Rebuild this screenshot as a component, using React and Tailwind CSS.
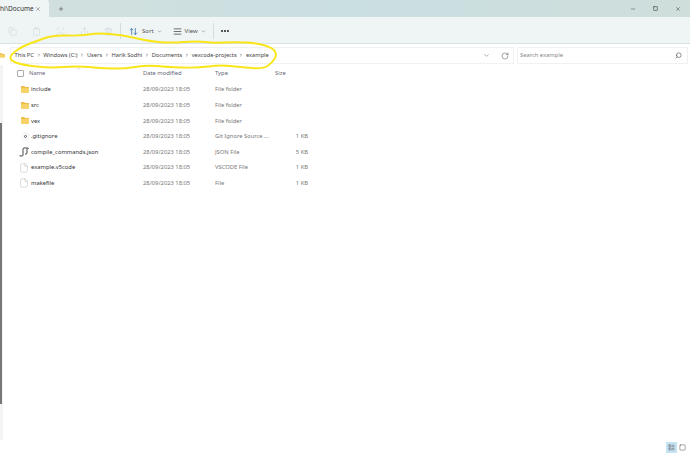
import { ChevronDown, ChevronRight, ChevronUp, Copy, Clipboard, Share, Trash2, ArrowUpDown, AlignJustify, MoreHorizontal, RotateCw, Search, Minus, X, Plus, File, ScanFace, LayoutList, Square } from 'lucide-react';

const CRUMBS = ['This PC', 'Windows (C:)', 'Users', 'Harik Sodhi', 'Documents', 'vexcode-projects', 'example'];

const FILES = [
  { name: 'include', type: 'File folder', size: '', kind: 'folder' },
  { name: 'src', type: 'File folder', size: '', kind: 'folder' },
  { name: 'vex', type: 'File folder', size: '', kind: 'folder' },
  { name: '.gitignore', type: 'Git Ignore Source ...', size: '1 KB', kind: 'git' },
  { name: 'compile_commands.json', type: 'JSON File', size: '5 KB', kind: 'json' },
  { name: 'example.v5code', type: 'VSCODE File', size: '1 KB', kind: 'file' },
  { name: 'makefile', type: 'File', size: '1 KB', kind: 'file' },
];

// hand-drawn yellow ring round the breadcrumb
const RING = [
  [10, 55], [23, 46], [37, 41], [53, 35], [80, 36], [97, 33], [123, 35], [147, 41], [170, 43], [197, 41], [213, 43],
  [233, 42], [257, 43], [273, 48], [277, 55], [272, 63], [263, 69], [240, 67], [220, 65], [197, 68], [167, 67],
  [147, 65], [123, 69], [100, 68], [77, 66], [50, 68], [23, 65], [11, 61],
];

function ringPath(points) {
  const mid = (a, b) => [(a[0] + b[0]) / 2, (a[1] + b[1]) / 2];
  const start = mid(points[points.length - 1], points[0]);
  let d = `M${start[0]} ${start[1]}`;
  points.forEach((p, i) => {
    const m = mid(p, points[(i + 1) % points.length]);
    d += ` Q${p[0]} ${p[1]} ${m[0]} ${m[1]}`;
  });
  return d + ' Z';
}

function FolderIcon({ className }) {
  return (
    <svg className={className} viewBox="0 0 8 7">
      <path d="M0 1 Q0 0 1 0 H3 L4 1 H7 Q8 1 8 2 V6 Q8 7 7 7 H1 Q0 7 0 6 Z" fill="#f7d268" />
      <path d="M0 1 Q0 0 1 0 H3 L4 1 H8 V2 H0 Z" fill="#eebc48" />
    </svg>
  );
}

function FileIcon({ kind }) {
  if (kind === 'folder') return <FolderIcon className="h-[7px] w-[8px]" />;
  if (kind === 'git') {
    return (
      <span className="relative flex h-[9px] w-[8px] items-center justify-center">
        <File className="absolute h-[9px] w-[9px] text-[#ddd]" strokeWidth={1} />
        <span className="relative h-[3px] w-[3px] rounded-full border border-[#556]" />
      </span>
    );
  }
  if (kind === 'json') {
    return (
      <svg className="h-[10px] w-[10px]" viewBox="0 0 10 10" fill="none" stroke="#333" strokeWidth="0.9">
        <path d="M3 9 H1.5 Q.5 9 1 8 M3 9 Q4 9 4 8 V2 Q4 1 5 1 H8.5 Q9.5 1 9.5 2 M8 1.5 V6 Q8 7 7 7 H6" />
      </svg>
    );
  }
  return <File className="h-[10px] w-[10px] text-[#aaa]" strokeWidth={1} />;
}

function App() {
  return (
    <div className="relative flex h-[454px] w-[690px] flex-col overflow-hidden bg-white font-['Noto_Sans',sans-serif] text-[#555]">
      <div className="flex h-[17px] items-center bg-[linear-gradient(90deg,#d2e0dd,#cadfe2_50%,#cfdedb)]">
        <div className="flex h-[17px] w-[49px] items-center rounded-tr-[3px] bg-[#eff4f4]">
          <span className="w-[34px] overflow-hidden text-[6.5px] whitespace-nowrap text-[#333]">hi\Docume</span>
          <X className="ml-[1px] h-[6px] w-[6px] text-[#666]" />
        </div>
        <Plus className="ml-[9px] h-[6px] w-[6px] text-[#555]" strokeWidth={2.5} />
        <div className="ml-auto flex items-center gap-[17px] pr-[9px] text-[#444]">
          <Minus className="h-[6px] w-[6px]" strokeWidth={2} />
          <Square className="h-[5px] w-[5px]" strokeWidth={3} />
          <X className="h-[6px] w-[6px]" strokeWidth={2} />
        </div>
      </div>

      <div className="flex h-[27px] items-center border-b border-[#d9e2e4] bg-[#eff4f4] pt-[2px] pl-[8px]">
        <div className="flex items-center gap-[15px] text-[#c3d3d8]">
          <Copy className="h-[9px] w-[9px]" strokeWidth={1.2} />
          <Clipboard className="h-[9px] w-[9px]" strokeWidth={1.2} />
          <ScanFace className="h-[9px] w-[9px]" strokeWidth={1.2} />
          <Share className="h-[9px] w-[9px]" strokeWidth={1.2} />
          <Trash2 className="h-[9px] w-[9px]" strokeWidth={1.2} />
        </div>
        <div className="ml-[7px] h-[16px] w-px bg-[#d5dcde]" />
        <ArrowUpDown className="ml-[8px] h-[9px] w-[9px] text-[#3a6ea5]" />
        <span className="ml-[4px] text-[6px]">Sort</span>
        <ChevronDown className="ml-[3px] h-[5px] w-[5px]" />
        <AlignJustify className="ml-[11px] h-[9px] w-[9px] text-[#666]" strokeWidth={2.5} />
        <span className="ml-[3px] text-[6px]">View</span>
        <ChevronDown className="ml-[3px] h-[5px] w-[5px]" />
        <div className="ml-[7px] h-[16px] w-px bg-[#d5dcde]" />
        <MoreHorizontal className="ml-[6px] h-[10px] w-[10px] text-[#222]" strokeWidth={3} />
      </div>

      <div className="flex h-[21px] items-center pr-[2px] pt-[2px]">
        <FolderIcon className="h-[5px] w-[5px] shrink-0" />
        <div className="ml-[5px] flex h-[17px] w-[504px] items-center border border-[#f1f1f1] pl-[3.5px]">
          {CRUMBS.map((crumb, i) => (
            <span key={crumb} className="flex items-center text-[5.7px] whitespace-nowrap text-[#444]">
              {i > 0 && <ChevronRight className="mx-[2.7px] h-[4px] w-[4px] text-[#333]" strokeWidth={3} />}
              {crumb}
            </span>
          ))}
          <ChevronDown className="ml-auto h-[7px] w-[7px] text-[#777]" />
          <RotateCw className="mr-[4px] ml-[11px] h-[8px] w-[8px] text-[#777]" />
        </div>
        <div className="ml-[3px] flex h-[17px] flex-1 items-center justify-between border border-[#f1f1f1] pr-[5px] pl-[2px]">
          <span className="text-[5.8px] text-[#888]">Search example</span>
          <Search className="h-[7px] w-[7px] -scale-x-100 text-[#444]" />
        </div>
      </div>

      <div className="flex min-h-0 flex-1">
        <div className="w-[3px] shrink-0 bg-[#f4f4f4] pt-[58px]">
          <div className="h-[281px] w-[2px] bg-[#777]" />
        </div>
        <div className="min-w-0 flex-1 pl-[14px]">
          <div className="relative flex h-[17px] items-center text-[5.8px] text-[#667]">
            <span className="h-[7px] w-[7px] rounded-[1px] border border-[#aaa]" />
            <span className="ml-[5px] w-[114px]">Name</span>
            <span className="w-[72px]">Date modified</span>
            <span className="w-[60px]">Type</span>
            <span>Size</span>
            <ChevronUp className="absolute top-[1px] left-[59px] h-[5px] w-[5px] text-[#999]" />
          </div>
          <div className="flex flex-col">
            {FILES.map((f) => (
              <div key={f.name} className="flex h-[15.6px] items-center text-[5.8px]">
                <span className="flex w-[12px] justify-end"><FileIcon kind={f.kind} /></span>
                <span className="ml-[2px] w-[112px] whitespace-nowrap text-[#333]">{f.name}</span>
                <span className="w-[72px] text-[#777]">28/09/2023 18:05</span>
                <span className="w-[60px] whitespace-nowrap text-[#777]">{f.type}</span>
                <span className="w-[33px] text-right text-[#777]">{f.size}</span>
              </div>
            ))}
          </div>
        </div>
      </div>

      <div className="flex h-[14px] items-center justify-end gap-[2px] pr-[4px]">
        <span className="flex h-[11px] w-[11px] items-center justify-center bg-[#c5e3f3]">
          <LayoutList className="h-[7px] w-[7px] text-[#666]" />
        </span>
        <Square className="h-[7px] w-[7px] text-[#666]" />
      </div>

      <svg className="absolute top-0 left-0" width="690" height="454" viewBox="0 0 690 454" fill="none">
        <path d={ringPath(RING)} stroke="#f8e61b" strokeWidth="2" />
      </svg>
    </div>
  );
}

export default App;
